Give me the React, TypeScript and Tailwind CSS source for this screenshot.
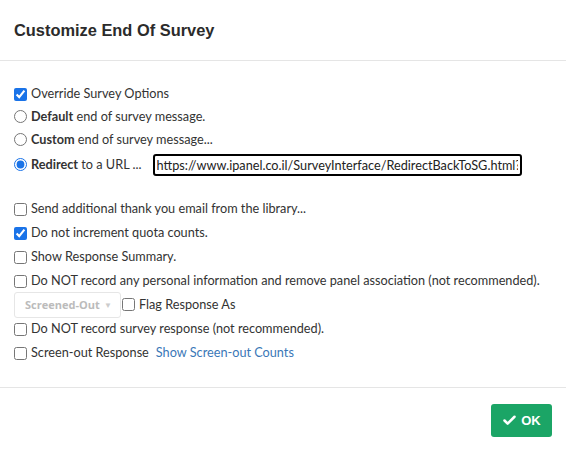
import { Check } from 'lucide-react';

function CheckRow({ label, checked = false }: { label: React.ReactNode; checked?: boolean }) {
  return (
    <label className="flex h-6 items-center whitespace-nowrap">
      <input type="checkbox" defaultChecked={checked} className="m-0 h-[13px] w-[13px] accent-[#1a73e8]" />
      <span className="ml-[4px]">{label}</span>
    </label>
  );
}

function RadioRow({ children, checked = false }: { children: React.ReactNode; checked?: boolean }) {
  return (
    <label className="flex items-center whitespace-nowrap">
      <input type="radio" name="eos" defaultChecked={checked} className="m-0 h-[13px] w-[13px] accent-[#1a73e8]" />
      <span className="ml-[4px] flex items-center">{children}</span>
    </label>
  );
}

export default function App() {
  return (
    <div className="h-[449px] w-[566px] bg-white text-[12.7px] text-[#333]" style={{ fontFamily: 'Lato, "Open Sans", sans-serif' }}>
      <div className="flex h-[61px] items-center border-b border-[#e5e5e5] px-[14px]">
        <h3 className="text-[16.4px] font-bold text-[#2b2b2b]" style={{ fontFamily: '"Liberation Sans", Arial, sans-serif' }}>
          Customize End Of Survey
        </h3>
      </div>
      <div className="relative h-[326px] px-[14px] pt-[21px]">
        <CheckRow label="Override Survey Options" checked />
        <div className="flex h-[22px] items-center">
          <RadioRow>
            <b className="font-bold">Default</b>&nbsp;end of survey message.
          </RadioRow>
        </div>
        <div className="flex h-[24px] items-center">
          <RadioRow>
            <b className="font-bold">Custom</b>&nbsp;end of survey message...
          </RadioRow>
        </div>
        <div className="flex h-[26px] items-center gap-[11px]">
          <RadioRow checked>
            <b className="font-bold">Redirect</b>&nbsp;to a URL ...
          </RadioRow>
          <input
            type="text"
            defaultValue="https://www.ipanel.co.il/SurveyInterface/RedirectBackToSG.html?id=1"
            className="h-[22px] w-[369px] rounded-[3px] border-2 border-black px-[2px] text-[12.7px] text-[#222] outline-none"
          />
        </div>
        <div className="h-[19px]" />
        <CheckRow label="Send additional thank you email from the library..." />
        <CheckRow label="Do not increment quota counts." checked />
        <CheckRow label="Show Response Summary." />
        <CheckRow label="Do NOT record any personal information and remove panel association (not recommended)." />
        <div className="flex h-6 items-center">
          <div className="flex h-[26px] w-[107px] items-center justify-between rounded-[3px] border border-[#e6e6e6] pl-[10px] pr-[8px] text-[11px] font-bold text-[#bbb]" style={{ fontFamily: '"Open Sans", sans-serif' }}>
            <span>Screened-Out</span>
            <span className="text-[8px] text-[#ccc]">▼</span>
          </div>
          <label className="flex items-center">
            <input type="checkbox" className="m-0 ml-[1px] h-[13px] w-[13px] accent-[#1a73e8]" />
            <span className="ml-[4px]">Flag Response As</span>
          </label>
        </div>
        <CheckRow label="Do NOT record survey response (not recommended)." />
        <label className="flex h-6 items-center">
          <input type="checkbox" className="m-0 h-[13px] w-[13px] accent-[#1a73e8]" />
          <span className="ml-[4px]">Screen-out Response</span>
          <a className="ml-[7px] text-[#3a77b7]" href="#">
            Show Screen-out Counts
          </a>
        </label>
      </div>
      <div className="flex justify-end border-t border-[#e5e5e5] px-[14px] pt-[16px]">
        <button
          type="button"
          className="flex h-[33px] w-[61px] items-center justify-center gap-[4px] rounded-[3px] bg-[#1ba566] text-[13px] font-bold text-white"
          style={{ fontFamily: '"Liberation Sans", Arial, sans-serif' }}
        >
          <Check className="h-[15px] w-[15px]" strokeWidth={4} />
          OK
        </button>
      </div>
    </div>
  );
}
